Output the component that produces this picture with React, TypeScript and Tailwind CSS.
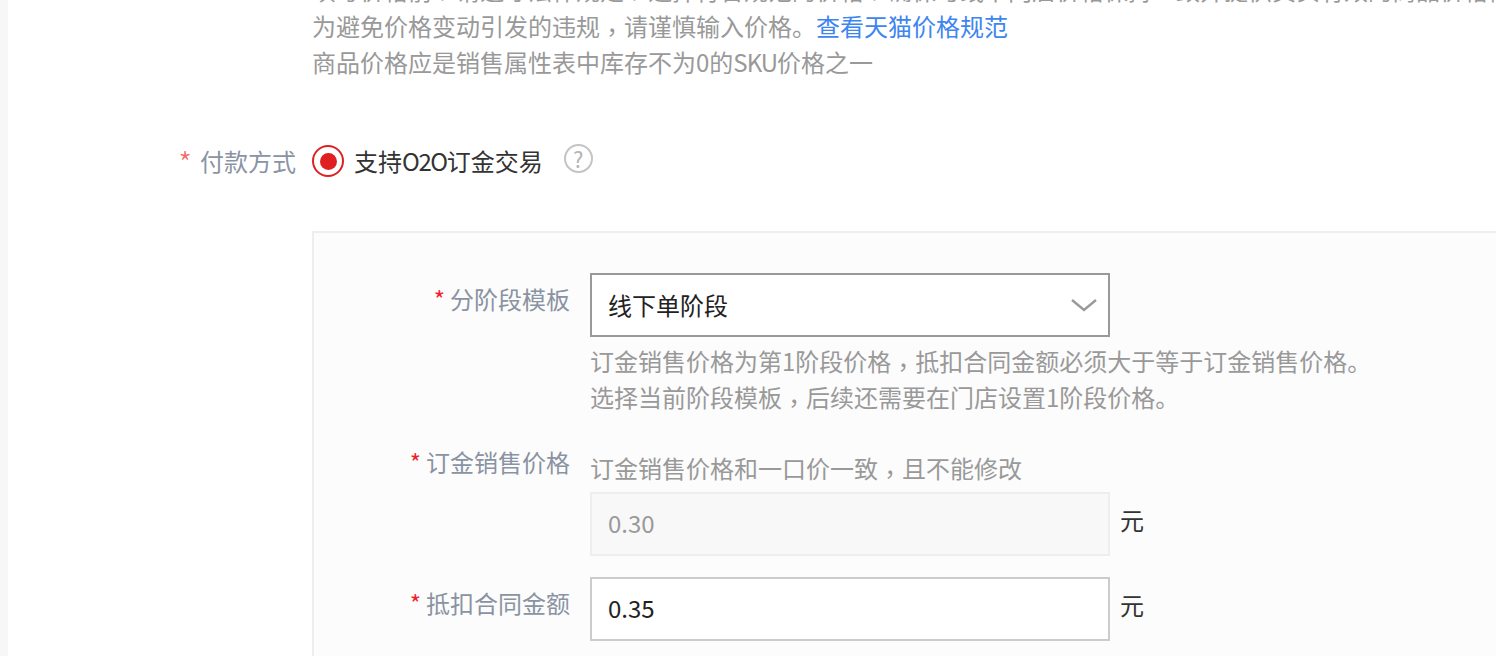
import * as React from "react";

// full-width comma sits centred in the reference, the TC face draws it that way
function Comma(): React.ReactElement {
  return <span className="relative top-[5px] font-['Noto_Sans_CJK_TC']">，</span>;
}

function Label({ text, className, soft }: { text: string; className?: string; soft?: boolean }): React.ReactElement {
  return (
    <div className={`shrink-0 text-right text-[24px] leading-[36px] text-[#8a93a3] ${className ?? ""}`}>
      <span
        className={
          soft
            ? "mr-[8px] align-[-5px] text-[31px] leading-none font-light text-[#f56a6a]"
            : "mr-[5px] text-[#f01f2d]"
        }
      >
        *
      </span>
      {text}
    </div>
  );
}

function Hint({ children, className }: { children: React.ReactNode; className?: string }): React.ReactElement {
  return <div className={`text-[24px] leading-[36px] text-[#999999] ${className ?? ""}`}>{children}</div>;
}

function MoneyRow({ value, disabled }: { value: string; disabled?: boolean }): React.ReactElement {
  return (
    <div className="flex items-center gap-[10px]">
      <div
        className={
          disabled
            ? "flex h-[64px] w-[520px] items-center border-2 border-[#eeeeee] bg-[#f8f8f8] px-[16px] pb-[2px] text-[24px] text-[#999999]"
            : "flex h-[64px] w-[520px] items-center border-2 border-[#cccccc] bg-white px-[16px] pb-[2px] text-[24px] text-[#222222]"
        }
      >
        {value}
      </div>
      <span className="mt-[-8px] text-[24px] leading-[36px] text-[#333333]">元</span>
    </div>
  );
}

export default function App(): React.ReactElement {
  return (
    <div className="flex h-[656px] w-full overflow-hidden bg-white font-['Noto_Sans_CJK_SC','Noto_Sans',sans-serif]">
      <div className="w-[8px] shrink-0 bg-[#f7f7f7]" />
      <div className="min-w-0 flex-1">
        <div className="ml-[304px] mt-[-28px] whitespace-nowrap">
          <Hint>
            填写价格前
            <Comma />
            请遵守法律规定
            <Comma />
            选择符合规范的价格
            <Comma />
            确保与线下门店价格保持一致并提供真实有效的商品价格信息
            <Comma />
            不得虚构原价误导消费者
          </Hint>
          <Hint>
            为避免价格变动引发的违规
            <Comma />
            请谨慎输入价格。
            <span className="text-[#3d85f0]">查看天猫价格规范</span>
          </Hint>
          <Hint>
            商品价格应是销售属性表中库存不为0的<span className="tracking-[-1px]">SKU</span>价格之一
          </Hint>
        </div>

        <div className="mt-[63px] flex items-center">
          <Label text="付款方式" className="w-[288px]" soft />
          <div className="ml-[16px] flex items-center">
            <span className="flex h-[32px] w-[32px] items-center justify-center rounded-full border-2 border-[#e02020]">
              <span className="h-[17px] w-[17px] rounded-full bg-[#e02020]" />
            </span>
            <span className="ml-[10px] text-[24px] leading-[36px] text-[#333333]">
              支持<span className="tracking-[-1.4px]">O2O</span>订金交易
            </span>
            <span className="ml-[21px] mt-[-6px] flex h-[29px] w-[29px] items-center justify-center rounded-full border-2 border-[#c4c4c4] text-[22px] leading-none text-[#b5b5b5]">
              ?
            </span>
          </div>
        </div>

        <div className="ml-[304px] mt-[52px] min-h-[500px] border-2 border-r-0 border-[#eeeeee] bg-[#fcfcfc] pt-[40px]">
          <div className="flex">
            <Label text="分阶段模板" className="mt-[8px] w-[256px]" />
            <div className="ml-[20px]">
              <div className="flex h-[64px] w-[520px] items-center justify-between border-2 border-[#999999] bg-white pl-[16px] pr-[11px] text-[24px] text-[#222222]">
                <span>线下单阶段</span>
                <svg width="26" height="14" viewBox="0 0 26 14" fill="none" stroke="#999999" strokeWidth="2.4">
                  <path d="M1 2 L13 12 L25 2" />
                </svg>
              </div>
              <Hint className="mt-[6px]">
                订金销售价格为第1阶段价格
                <Comma />
                抵扣合同金额必须大于等于订金销售价格。
              </Hint>
              <Hint>
                选择当前阶段模板
                <Comma />
                后续还需要在门店设置1阶段价格。
              </Hint>
            </div>
          </div>

          <div className="mt-[29px] flex">
            <Label text="订金销售价格" className="w-[256px]" />
            <div className="ml-[20px]">
              <Hint className="mt-[6px] mb-[6px]">
                订金销售价格和一口价一致
                <Comma />
                且不能修改
              </Hint>
              <MoneyRow value="0.30" disabled />
            </div>
          </div>

          <div className="mt-[21px] flex">
            <Label text="抵扣合同金额" className="mt-[8px] w-[256px]" />
            <div className="ml-[20px]">
              <MoneyRow value="0.35" />
            </div>
          </div>
        </div>
      </div>
    </div>
  );
}
